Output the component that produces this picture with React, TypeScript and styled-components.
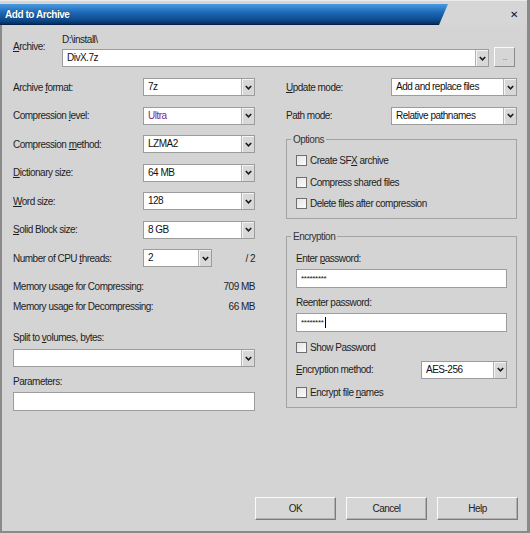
import React from 'react';
import styled, { createGlobalStyle } from 'styled-components';

const GlobalStyle = createGlobalStyle`
  html, body {
    margin: 0;
    padding: 0;
    background: #d4d4d4;
  }
  body {
    font-family: "Liberation Sans", Arial, sans-serif;
    font-size: 10px;
    letter-spacing: -0.5px;
    color: #1e1e1e;
  }
  * {
    box-sizing: border-box;
  }
`;

const Window = styled.div`
  width: 530px;
  height: 533px;
  display: flex;
  flex-direction: column;
  background: #d4d4d4;
  border-right: 3px solid #8a8a8a;
  overflow: hidden;
`;

const TitleBar = styled.div`
  flex: 0 0 25px;
  display: flex;
  align-items: stretch;
  padding-top: 3px;
  background: #d6d6d6;
  border-top: 1px solid #ececec;
`;

const TitleTab = styled.div`
  width: 448px;
  display: flex;
  align-items: center;
  padding-left: 5px;
  background: linear-gradient(#4a9ae0 0%, #1f6bb8 40%, #0d4a8c 80%, #082e5c 100%);
  border-bottom: 1px solid #05214a;
  clip-path: polygon(0 0, 100% 0, calc(100% - 9px) 100%, 0 100%);
  color: #fff;
  font-weight: bold;
  font-size: 10px;
  letter-spacing: -0.45px;
  text-shadow: 0 0 1px rgba(0, 0, 0, 0.5);
`;

const CloseGlyph = styled.span`
  margin-left: auto;
  margin-right: 9px;
  align-self: center;
  font-family: "DejaVu Sans", sans-serif;
  font-weight: bold;
  font-size: 10px;
  color: #111;
`;

const Content = styled.div`
  flex: 1;
  display: flex;
  flex-direction: column;
  padding: 8px 10px 11px 11px;
  border-left: 2px solid #8a8a8a;
  border-bottom: 2px solid #8a8a8a;
`;

const ArchiveRow = styled.div`
  display: flex;
  align-items: flex-start;
`;

const ArchiveLabel = styled.label`
  width: 49px;
  padding-top: 7px;
  line-height: 14px;
`;

const FieldColumn = styled.div`
  flex: 1;
  display: flex;
  flex-direction: column;
`;

const PathText = styled.div`
  line-height: 14px;
  margin-bottom: 2px;
`;

const BrowseButton = styled.div`
  width: 21px;
  height: 20px;
  margin: 14px 2px 0 5px;
  display: flex;
  align-items: center;
  justify-content: center;
  background: #d6d6d6;
  border: 1px solid;
  border-color: #fafafa #8c8c8c #8c8c8c #fafafa;
  color: #9a8fb8;
  font-size: 9px;
  letter-spacing: -1px;
`;

const Columns = styled.div`
  display: grid;
  grid-template-columns: 242px 231px;
  column-gap: 31px;
  margin-top: 11px;
`;

const Column = styled.div`
  display: flex;
  flex-direction: column;
`;

const SettingsList = styled.div`
  display: flex;
  flex-direction: column;
  gap: 10.5px;
`;

const FieldRow = styled.div<{ $labelWidth: number; $gap?: number }>`
  display: grid;
  grid-template-columns: ${p => p.$labelWidth}px 1fr;
  align-items: center;
  height: 18px;
  margin-top: ${p => p.$gap ?? 0}px;
`;

const Key = styled.u`
  text-decoration: underline;
  text-underline-offset: 1px;
`;

const ComboBox = styled.div<{ $width?: number }>`
  display: flex;
  height: 18px;
  width: ${p => (p.$width ? `${p.$width}px` : '100%')};
  background: #fff;
  border: 1px solid #9c9c9c;
`;

const ComboValue = styled.span<{ $accent?: boolean }>`
  flex: 1;
  padding-left: 4px;
  line-height: 16px;
  color: ${p => (p.$accent ? '#7d1f7d' : '#111')};
  white-space: nowrap;
  overflow: hidden;
`;

const ComboArrow = styled.span`
  width: 13px;
  display: flex;
  align-items: center;
  justify-content: center;
  background: #d8d8d8;
  border-left: 1px solid #b4b4b4;
  box-shadow: inset 1px 1px 0 #f4f4f4;
`;

const ThreadsCell = styled.div`
  display: flex;
  align-items: center;
`;

const ThreadsMax = styled.span`
  margin-left: auto;
`;

const MemoryRow = styled.div<{ $gap: number }>`
  display: flex;
  justify-content: space-between;
  line-height: 14px;
  margin-top: ${p => p.$gap}px;
`;

const StackLabel = styled.div<{ $gap: number }>`
  line-height: 14px;
  margin-top: ${p => p.$gap}px;
`;

const FullCombo = styled.div`
  margin-top: 4px;
`;

const TextField = styled.div<{ $gap?: number }>`
  height: 19px;
  margin-top: ${p => p.$gap ?? 3}px;
  display: flex;
  align-items: center;
  padding-left: 4px;
  background: #fff;
  border: 1px solid #9c9c9c;
`;

const Masked = styled.span`
  font-size: 8px;
  letter-spacing: -0.3px;
  color: #111;
`;

const Caret = styled.span`
  display: inline-block;
  width: 1px;
  height: 11px;
  margin-left: 1px;
  background: #000;
`;

const Group = styled.fieldset<{ $gap: number }>`
  margin: ${p => p.$gap}px 0 0 0;
  padding: 0 9px 7px 9px;
  border: 1px solid #a3a3a3;
  min-width: 0;
`;

const GroupTitle = styled.legend`
  padding: 0 2px;
  margin-left: -5px;
  line-height: 14px;
  color: #333;
`;

const CheckList = styled.div`
  display: flex;
  flex-direction: column;
  gap: 7.5px;
  padding-top: 7px;
`;

const CheckRow = styled.label<{ $gap?: number }>`
  display: flex;
  align-items: center;
  height: 14px;
  margin-top: ${p => p.$gap ?? 0}px;
`;

const CheckBox = styled.span`
  width: 11px;
  height: 11px;
  margin-right: 3px;
  background: linear-gradient(135deg, #e6e6e6, #fbfbfb);
  border: 1px solid #6f6f6f;
`;

const ButtonRow = styled.div`
  margin-top: auto;
  display: flex;
  justify-content: flex-end;
  gap: 10px;
  margin-right: -1px;
`;

const DialogButton = styled.div`
  width: 81px;
  height: 23px;
  display: flex;
  align-items: center;
  justify-content: center;
  background: #d6d6d6;
  border: 1px solid;
  border-color: #fafafa #7c7c7c #7c7c7c #fafafa;
  box-shadow: inset -1px -1px 0 #b0b0b0;
  color: #222;
`;

const Chevron = () => (
  <svg width="7" height="5" viewBox="0 0 7 5">
    <polyline points="0.8,1 3.5,3.8 6.2,1" fill="none" stroke="#1a1a1a" strokeWidth="1.6" />
  </svg>
);

const Combo = ({ value, width, accent }: { value: string; width?: number; accent?: boolean }) => (
  <ComboBox $width={width}>
    <ComboValue $accent={accent}>{value}</ComboValue>
    <ComboArrow>
      <Chevron />
    </ComboArrow>
  </ComboBox>
);

const Check = ({ children, gap }: { children: React.ReactNode; gap?: number }) => (
  <CheckRow $gap={gap}>
    <CheckBox />
    <span>{children}</span>
  </CheckRow>
);

const App = () => (
  <>
    <GlobalStyle />
    <Window>
      <TitleBar>
        <TitleTab>Add to Archive</TitleTab>
        <CloseGlyph>✕</CloseGlyph>
      </TitleBar>
      <Content>
        <ArchiveRow>
          <ArchiveLabel>
            <Key>A</Key>rchive:
          </ArchiveLabel>
          <FieldColumn>
            <PathText>D:\install\</PathText>
            <Combo value="DivX.7z" />
          </FieldColumn>
          <BrowseButton>...</BrowseButton>
        </ArchiveRow>

        <Columns>
          <Column>
            <SettingsList>
              <FieldRow $labelWidth={130}>
                <span>
                  Archive <Key>f</Key>ormat:
                </span>
                <Combo value="7z" />
              </FieldRow>
              <FieldRow $labelWidth={130}>
                <span>
                  Compression <Key>l</Key>evel:
                </span>
                <Combo value="Ultra" accent />
              </FieldRow>
              <FieldRow $labelWidth={130}>
                <span>
                  Compression <Key>m</Key>ethod:
                </span>
                <Combo value="LZMA2" />
              </FieldRow>
              <FieldRow $labelWidth={130}>
                <span>
                  <Key>D</Key>ictionary size:
                </span>
                <Combo value="64 MB" />
              </FieldRow>
              <FieldRow $labelWidth={130}>
                <span>
                  <Key>W</Key>ord size:
                </span>
                <Combo value="128" />
              </FieldRow>
              <FieldRow $labelWidth={130}>
                <span>
                  <Key>S</Key>olid Block size:
                </span>
                <Combo value="8 GB" />
              </FieldRow>
              <FieldRow $labelWidth={130}>
                <span>
                  Number of CPU <Key>t</Key>hreads:
                </span>
                <ThreadsCell>
                  <Combo value="2" width={69} />
                  <ThreadsMax>/ 2</ThreadsMax>
                </ThreadsCell>
              </FieldRow>
            </SettingsList>

            <MemoryRow $gap={13}>
              <span>Memory usage for Compressing:</span>
              <span>709 MB</span>
            </MemoryRow>
            <MemoryRow $gap={6}>
              <span>Memory usage for Decompressing:</span>
              <span>66 MB</span>
            </MemoryRow>

            <StackLabel $gap={17}>
              Split to <Key>v</Key>olumes, bytes:
            </StackLabel>
            <FullCombo>
              <Combo value="" />
            </FullCombo>

            <StackLabel $gap={8}>Parameters:</StackLabel>
            <TextField />
          </Column>

          <Column>
            <SettingsList>
              <FieldRow $labelWidth={105}>
                <span>
                  <Key>U</Key>pdate mode:
                </span>
                <Combo value="Add and replace files" />
              </FieldRow>
              <FieldRow $labelWidth={105}>
                <span>Path mode:</span>
                <Combo value="Relative pathnames" />
              </FieldRow>
            </SettingsList>

            <Group $gap={8}>
              <GroupTitle>Options</GroupTitle>
              <CheckList>
                <Check>
                  Create SF<Key>X</Key> archive
                </Check>
                <Check>Compress shared files</Check>
                <Check>Delete files after compression</Check>
              </CheckList>
            </Group>

            <Group $gap={11}>
              <GroupTitle>Encryption</GroupTitle>
              <StackLabel $gap={8}>
                Enter <Key>p</Key>assword:
              </StackLabel>
              <TextField>
                <Masked>*********</Masked>
              </TextField>
              <StackLabel $gap={8}>Reenter password:</StackLabel>
              <TextField>
                <Masked>********</Masked>
                <Caret />
              </TextField>
              <Check gap={9}>Show Password</Check>
              <FieldRow $labelWidth={125} $gap={6}>
                <span>
                  <Key>E</Key>ncryption method:
                </span>
                <Combo value="AES-256" />
              </FieldRow>
              <Check gap={7}>
                Encrypt file <Key>n</Key>ames
              </Check>
            </Group>
          </Column>
        </Columns>

        <ButtonRow>
          <DialogButton>OK</DialogButton>
          <DialogButton>Cancel</DialogButton>
          <DialogButton>Help</DialogButton>
        </ButtonRow>
      </Content>
    </Window>
  </>
);

export default App;
